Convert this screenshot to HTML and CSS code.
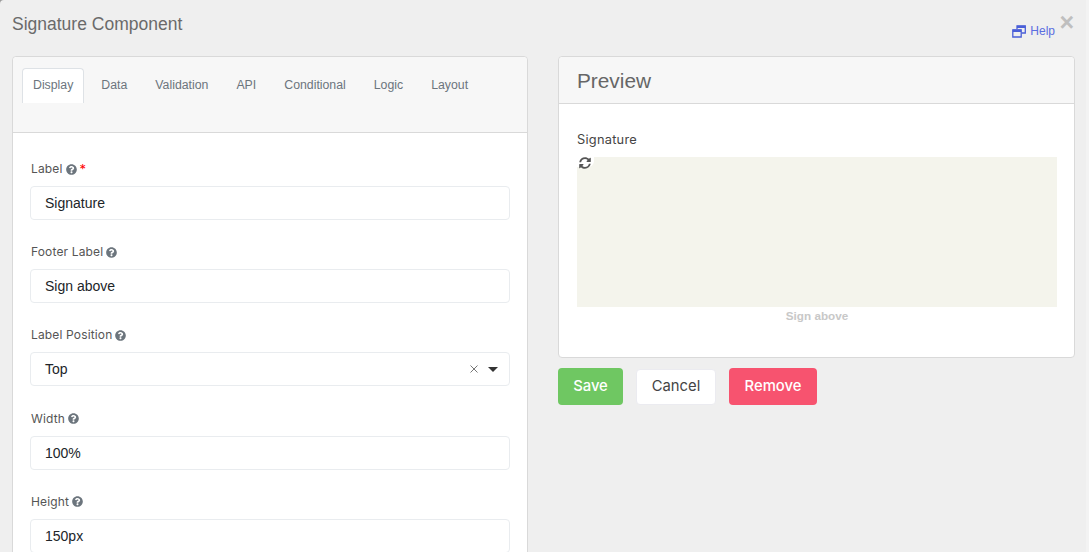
FILE: index.html
```html
<!DOCTYPE html>
<html lang="en">
<head>
<meta charset="utf-8">
<title>Signature Component</title>
<link rel="stylesheet" href="styles.css">
</head>
<body>
<svg class="defs" width="0" height="0" aria-hidden="true">
  <symbol id="q" viewBox="0 0 512 512"><path fill="currentColor" d="M504 256c0 137-111 248-248 248S8 393 8 256 119 8 256 8s248 111 248 248zM262.700 90c-54.500 0-89.300 23-116.500 63.800-3.500 5.300-2.400 12.400 2.700 16.300l34.700 26.300c5.200 3.900 12.600 3 16.700-2.100 17.900-22.700 30.100-35.800 57.300-35.800 20.400 0 45.700 13.100 45.700 33 0 15-12.400 22.700-32.600 34-23.600 13.200-54.800 29.700-54.800 70.900V302c0 6.600 5.400 12 12 12h56c6.600 0 12-5.400 12-12v-1.300c0-28.600 83.500-29.800 83.500-107.100 0-58.200-60.400-102.600-115.700-102.600zM256 338c-25.400 0-46 20.600-46 46s20.600 46 46 46 46-20.600 46-46-20.600-46-46-46z"/></symbol>
</svg>
<main class="modal">
  <header class="top">
    <h1 class="title">Signature Component</h1>
    <a class="help" href="#">
      <svg class="help-icon" viewBox="0 0 14 13" aria-hidden="true"><path fill="none" stroke="currentColor" stroke-width="1.300" d="M5 4V1h8.300v7H9.500"/><path fill="none" stroke="currentColor" stroke-width="1.300" d="M.8 5h8.400v7H.8z"/><path fill="currentColor" d="M.8 4.500h8.400v2.500H.8zM5 .8h8.300v2.200H5z"/></svg>
      Help
    </a>
    <span class="close">×</span>
  </header>
  <div class="columns">
    <section class="card editor">
      <nav class="tabs">
        <a class="tab active">Display</a>
        <a class="tab">Data</a>
        <a class="tab">Validation</a>
        <a class="tab">API</a>
        <a class="tab">Conditional</a>
        <a class="tab">Logic</a>
        <a class="tab">Layout</a>
      </nav>
      <div class="form">
        <div class="field">
          <label class="label">Label <svg class="qm"><use href="#q"/></svg> <span class="req">*</span></label>
          <div class="input">Signature</div>
        </div>
        <div class="field">
          <label class="label">Footer Label <svg class="qm"><use href="#q"/></svg></label>
          <div class="input">Sign above</div>
        </div>
        <div class="field">
          <label class="label">Label Position <svg class="qm"><use href="#q"/></svg></label>
          <div class="input select">
            <span class="grow">Top</span>
            <svg class="clear" viewBox="0 0 10 10" aria-hidden="true"><path d="M1.500 1.500l7 7M8.500 1.500l-7 7" stroke="currentColor" stroke-width="1" fill="none"/></svg>
            <span class="caret"></span>
          </div>
        </div>
        <div class="field">
          <label class="label">Width <svg class="qm"><use href="#q"/></svg></label>
          <div class="input">100%</div>
        </div>
        <div class="field">
          <label class="label">Height <svg class="qm"><use href="#q"/></svg></label>
          <div class="input">150px</div>
        </div>
      </div>
    </section>
    <div class="side">
      <section class="card preview">
        <h2 class="preview-head">Preview</h2>
        <div class="preview-body">
          <div class="sig-label">Signature</div>
          <div class="pad">
            <span class="refresh">
              <svg viewBox="0 0 512 512" aria-hidden="true"><path fill="currentColor" d="M370.700 133.300C339.500 104 298.900 88 255.800 88c-77.500.1-144.300 53.200-162.800 126.900-1.300 5.400-6.100 9.200-11.700 9.200H24.100c-7.500 0-13.200-6.800-11.800-14.200C33.900 94.900 134.800 8 256 8c66.400 0 126.800 26.100 171.300 68.700L463 41C478.100 25.900 504 36.600 504 57.900V192c0 13.300-10.700 24-24 24H345.900c-21.400 0-32.100-25.900-17-41l41.800-41.700zM32 296h134.100c21.400 0 32.100 25.900 17 41l-41.800 41.800c31.300 29.300 71.800 45.300 114.900 45.200 77.400-.1 144.300-53.100 162.800-126.800 1.300-5.400 6.100-9.200 11.700-9.200h57.300c7.500 0 13.200 6.800 11.800 14.200C478.100 417.100 377.200 504 256 504c-66.400 0-126.800-26.100-171.300-68.700L49 471C33.900 486.100 8 475.400 8 454.100V320c0-13.300 10.700-24 24-24z"/></svg>
            </span>
          </div>
          <div class="sig-foot">Sign above</div>
        </div>
      </section>
      <div class="actions">
        <button class="btn save">Save</button>
        <button class="btn cancel">Cancel</button>
        <button class="btn remove">Remove</button>
      </div>
    </div>
  </div>
</main>
</body>
</html>
```
FILE: styles.css
```css
* { box-sizing: border-box; }
html, body { margin: 0; height: 100%; overflow: hidden; }
body { background: #9a9a9a; font-family: "Liberation Sans", Arial, sans-serif; color: #212529; }
.defs { position: absolute; }
.modal { height: 552px; padding: 0 11px 0 12px; overflow: hidden; background: #efefef; border-right: 3px solid #f3f3f3; border-top-left-radius: 4px; }
.top { height: 56px; display: flex; align-items: flex-start; position: relative; }
.title { margin: 14px 0 0; font-size: 17.500px; line-height: 21px; font-weight: 400; color: #6a6a6a; flex: 1; }
.help { margin: 23px 20px 0 0; display: flex; align-items: center; gap: 4px; font-size: 12px; line-height: 16px; color: #5b6ee1; text-decoration: none; }
.help-icon { width: 14px; height: 13px; color: #4a5fd8; }
.close { position: absolute; right: 1px; top: 10px; font-size: 25px; line-height: 24px; font-weight: 700; color: #bfbfbf; }
.columns { display: grid; grid-template-columns: 516px 517px; gap: 30px; align-items: start; }
.card { background: #fff; border: 1px solid #d9d9d9; border-radius: 4px; }
.editor { height: 520px; }
.tabs { height: 76px; background: #f7f7f7; border-bottom: 1px solid #d9d9d9; border-radius: 4px 4px 0 0; padding: 11px 9px 0; display: flex; align-items: flex-start; }
.tab { height: 35px; padding: 0 11px 0 11px; margin-right: 6px; font-size: 12.300px; line-height: 34px; color: #6c757d; }
.tab.active { background: #fff; border: 1px solid #dee2e6; border-bottom: 0; border-radius: 4px 4px 0 0; padding: 0 10px; line-height: 33px; }
.form { padding: 28px 17px 0; }
.field { margin-bottom: 24.200px; }
.label { display: flex; align-items: center; gap: 3px; height: 16px; margin-bottom: 9px; padding-left: 1px; font-family: Inter, sans-serif; font-size: 12px; line-height: 16px; color: #555; letter-spacing: .15px; }
.qm { width: 11px; height: 11px; color: #6c757d; }
.req { color: #f00; font-size: 13px; }
.input { height: 34px; padding: 0 14px; border: 1px solid #e9ecef; border-radius: 4px; background: #fff; font-size: 14px; line-height: 32px; color: #212529; }
.select { display: flex; align-items: center; padding-right: 11px; }
.grow { flex: 1; }
.clear { width: 10px; height: 10px; color: #777; margin-right: 9px; }
.caret { width: 0; height: 0; border: 5px solid transparent; border-top-color: #333; border-bottom: 0; }
.preview { height: 302px; }
.preview-head { margin: 0; height: 47px; padding: 0 18px; background: #f7f7f7; border-bottom: 1px solid #d9d9d9; border-radius: 4px 4px 0 0; font-size: 20.800px; font-weight: 400; line-height: 48px; color: #666; }
.preview-body { padding: 28px 17px 0 18px; }
.sig-label { height: 16px; margin-bottom: 9px; font-family: Inter, sans-serif; font-size: 12.800px; line-height: 16px; color: #444; letter-spacing: .25px; }
.pad { height: 150px; background: #f4f4ec; }
.refresh { display: block; width: 17px; height: 10px; background: #fff; border-radius: 0 0 6px 0; padding: 0 0 0 2px; color: #555; }
.refresh svg { display: block; width: 12px; height: 12px; }
.sig-foot { margin-top: 1px; text-align: center; font-size: 11.700px; line-height: 16px; font-weight: 700; color: #c8c8c8; }
.actions { display: flex; gap: 13px; margin-top: 10px; }
.btn { height: 37px; border: 1px solid transparent; border-radius: 4px; font-family: Inter, sans-serif; font-size: 14.800px; color: #fff; padding: 0 0 2px; }
.save { width: 65px; background: #6fc762; font-weight: 500; }
.cancel { width: 80px; height: 36px; margin: 1px 0 0; background: #fff; border-color: #ebebf0; color: #444; }
.remove { width: 88px; background: #f7536f; font-weight: 500; }
```
